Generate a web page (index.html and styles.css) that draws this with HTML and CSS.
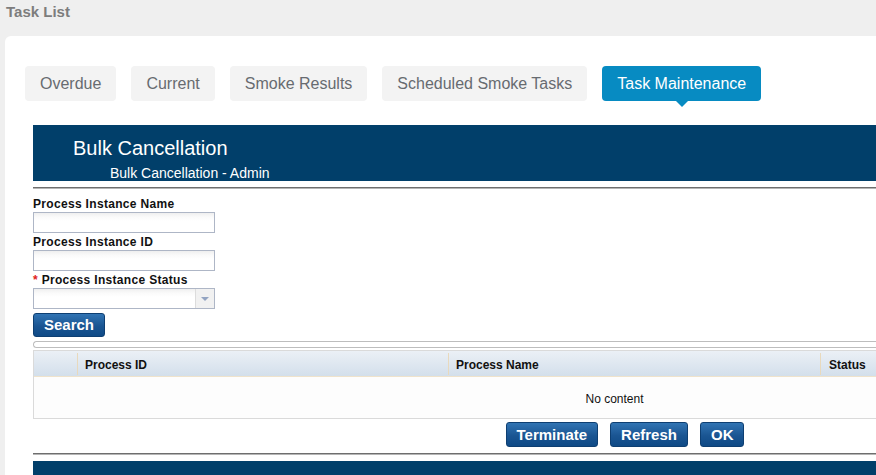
FILE: index.html
```html
<!DOCTYPE html>
<html>
<head>
<meta charset="utf-8">
<title>Task List</title>
<link rel="stylesheet" href="styles.css">
</head>
<body>
<div class="page-title">Task List</div>
<div class="panel">
  <div class="tabs">
    <div class="tab">Overdue</div>
    <div class="tab">Current</div>
    <div class="tab">Smoke Results</div>
    <div class="tab">Scheduled Smoke Tasks</div>
    <div class="tab active">Task Maintenance</div>
  </div>
  <div class="content">
    <div class="band">
      <div class="band-title">Bulk Cancellation</div>
      <div class="band-sub">Bulk Cancellation - Admin</div>
    </div>
    <div class="rule"></div>
    <div class="form">
      <div class="label">Process Instance Name</div>
      <div class="input"></div>
      <div class="label">Process Instance ID</div>
      <div class="input"></div>
      <div class="label"><span class="req">*</span> Process Instance Status</div>
      <div class="input select"><div class="arrow"><span class="tri"></span></div></div>
      <button class="btn search">Search</button>
    </div>
    <div class="pager"></div>
    <div class="grid">
      <div class="grid-head">
        <div class="th c1"></div>
        <div class="th c2">Process ID</div>
        <div class="th c3">Process Name</div>
        <div class="th c4">Status</div>
      </div>
      <div class="grid-body">No content</div>
    </div>
    <div class="actions">
      <button class="btn">Terminate</button>
      <button class="btn">Refresh</button>
      <button class="btn">OK</button>
    </div>
    <div class="rule bottom"></div>
    <div class="band lower"></div>
  </div>
</div>
</body>
</html>
```
FILE: styles.css
```css
html, body {
  margin: 0;
  padding: 0;
}
body {
  background: #efefef;
  font-family: "Liberation Sans", Arial, sans-serif;
  overflow: hidden;
  height: 475px;
}
.page-title {
  font-size: 15px;
  font-weight: bold;
  line-height: 18px;
  color: #7d7d7d;
  padding: 3px 0 0 6px;
}
.panel {
  margin: 15px 0 0 5px;
  background: #fff;
  border-radius: 6px 0 0 0;
  padding: 30px 0 0 20px;
  height: 500px;
}
.tabs {
  display: flex;
  gap: 15px;
}
.tab {
  position: relative;
  height: 35px;
  box-sizing: border-box;
  padding: 1px 15px 0;
  display: flex;
  align-items: center;
  background: #f3f3f3;
  color: #676b70;
  font-size: 16px;
  border-radius: 4px;
  white-space: nowrap;
}
.tab.active {
  background: #078bc2;
  color: #fff;
}
.tab.active::after {
  content: "";
  position: absolute;
  left: 50%;
  bottom: -6px;
  margin-left: -6px;
  border-left: 6px solid transparent;
  border-right: 6px solid transparent;
  border-top: 6px solid #078bc2;
}
.content {
  margin: 24px 0 0 8px;
  width: 1184px;
}
.band {
  background: #013f6a;
  height: 56px;
  box-sizing: border-box;
  padding-top: 11px;
  color: #fff;
}
.band-title {
  font-size: 20px;
  line-height: 24px;
  padding-left: 40px;
}
.band-sub {
  font-size: 14px;
  line-height: 16px;
  margin-top: 5px;
  padding-left: 77px;
}
.rule {
  margin-top: 6px;
  border-top: 1px solid #6e6e6e;
  border-bottom: 1px solid #b5b5b5;
}
.form {
  display: flex;
  flex-direction: column;
  align-items: flex-start;
  padding-top: 7px;
}
.label {
  font-size: 12px;
  font-weight: bold;
  line-height: 16px;
  letter-spacing: 0.32px;
  color: #111;
  margin-top: 1px;
}
.label:first-child {
  margin-top: 0;
}
.req {
  color: #e02020;
}
.input {
  position: relative;
  width: 182px;
  height: 21px;
  box-sizing: border-box;
  border: 1px solid #aeb6c6;
  background: linear-gradient(#efefef 0, #fafafa 4px, #fff 8px);
}
.select .arrow {
  position: absolute;
  right: 0;
  top: 0;
  bottom: 0;
  width: 18px;
  border-left: 1px solid #dcdcdc;
  background: #f1f1f1;
  display: flex;
  align-items: center;
  justify-content: center;
}
.tri {
  width: 0;
  height: 0;
  border-left: 4px solid transparent;
  border-right: 4px solid transparent;
  border-top: 4px solid #93a4c2;
}
.btn {
  font-family: "Liberation Sans", Arial, sans-serif;
  font-size: 15px;
  font-weight: bold;
  color: #fff;
  height: 25px;
  padding: 0 10px;
  border: 1px solid #0e3f72;
  border-radius: 3px;
  background: linear-gradient(#3174b3, #1a5592 55%, #0f4a86);
  line-height: 22px;
  margin: 0;
}
.search {
  margin-top: 4px;
  height: 24px;
}
.pager {
  margin-top: 4px;
  height: 7px;
  box-sizing: border-box;
  border: 1px solid #bdbdbd;
  border-right: none;
  border-radius: 4px 0 0 4px;
}
.grid {
  margin-top: 2px;
  width: 1161px;
  border: 1px solid #dadada;
  background: #fdfdfd;
}
.grid-head {
  display: flex;
  height: 26px;
  background: linear-gradient(#ebf0f6, #d3dfeb);
  border-bottom: 1px solid #efe3cc;
  box-sizing: border-box;
  padding: 2px 0 1px;
}
.th {
  font-size: 12px;
  font-weight: bold;
  color: #111;
  display: flex;
  align-items: center;
  padding: 2px 0 0 7px;
  box-sizing: border-box;
  border-left: 1px solid #e8d9bd;
}
.th.c1 {
  width: 43px;
  border-left: none;
  padding: 0;
}
.th.c2 { width: 371px; }
.th.c3 { width: 372px; }
.th.c4 { flex: 1; padding-left: 8px; }
.grid-body {
  height: 41px;
  display: flex;
  align-items: center;
  justify-content: center;
  font-size: 12px;
  color: #111;
  padding-top: 2px;
  box-sizing: border-box;
}
.actions {
  display: flex;
  justify-content: center;
  gap: 12px;
  margin-top: 3px;
}
.rule.bottom {
  margin-top: 6px;
}
.band.lower {
  margin-top: 6px;
  height: 40px;
}
```
